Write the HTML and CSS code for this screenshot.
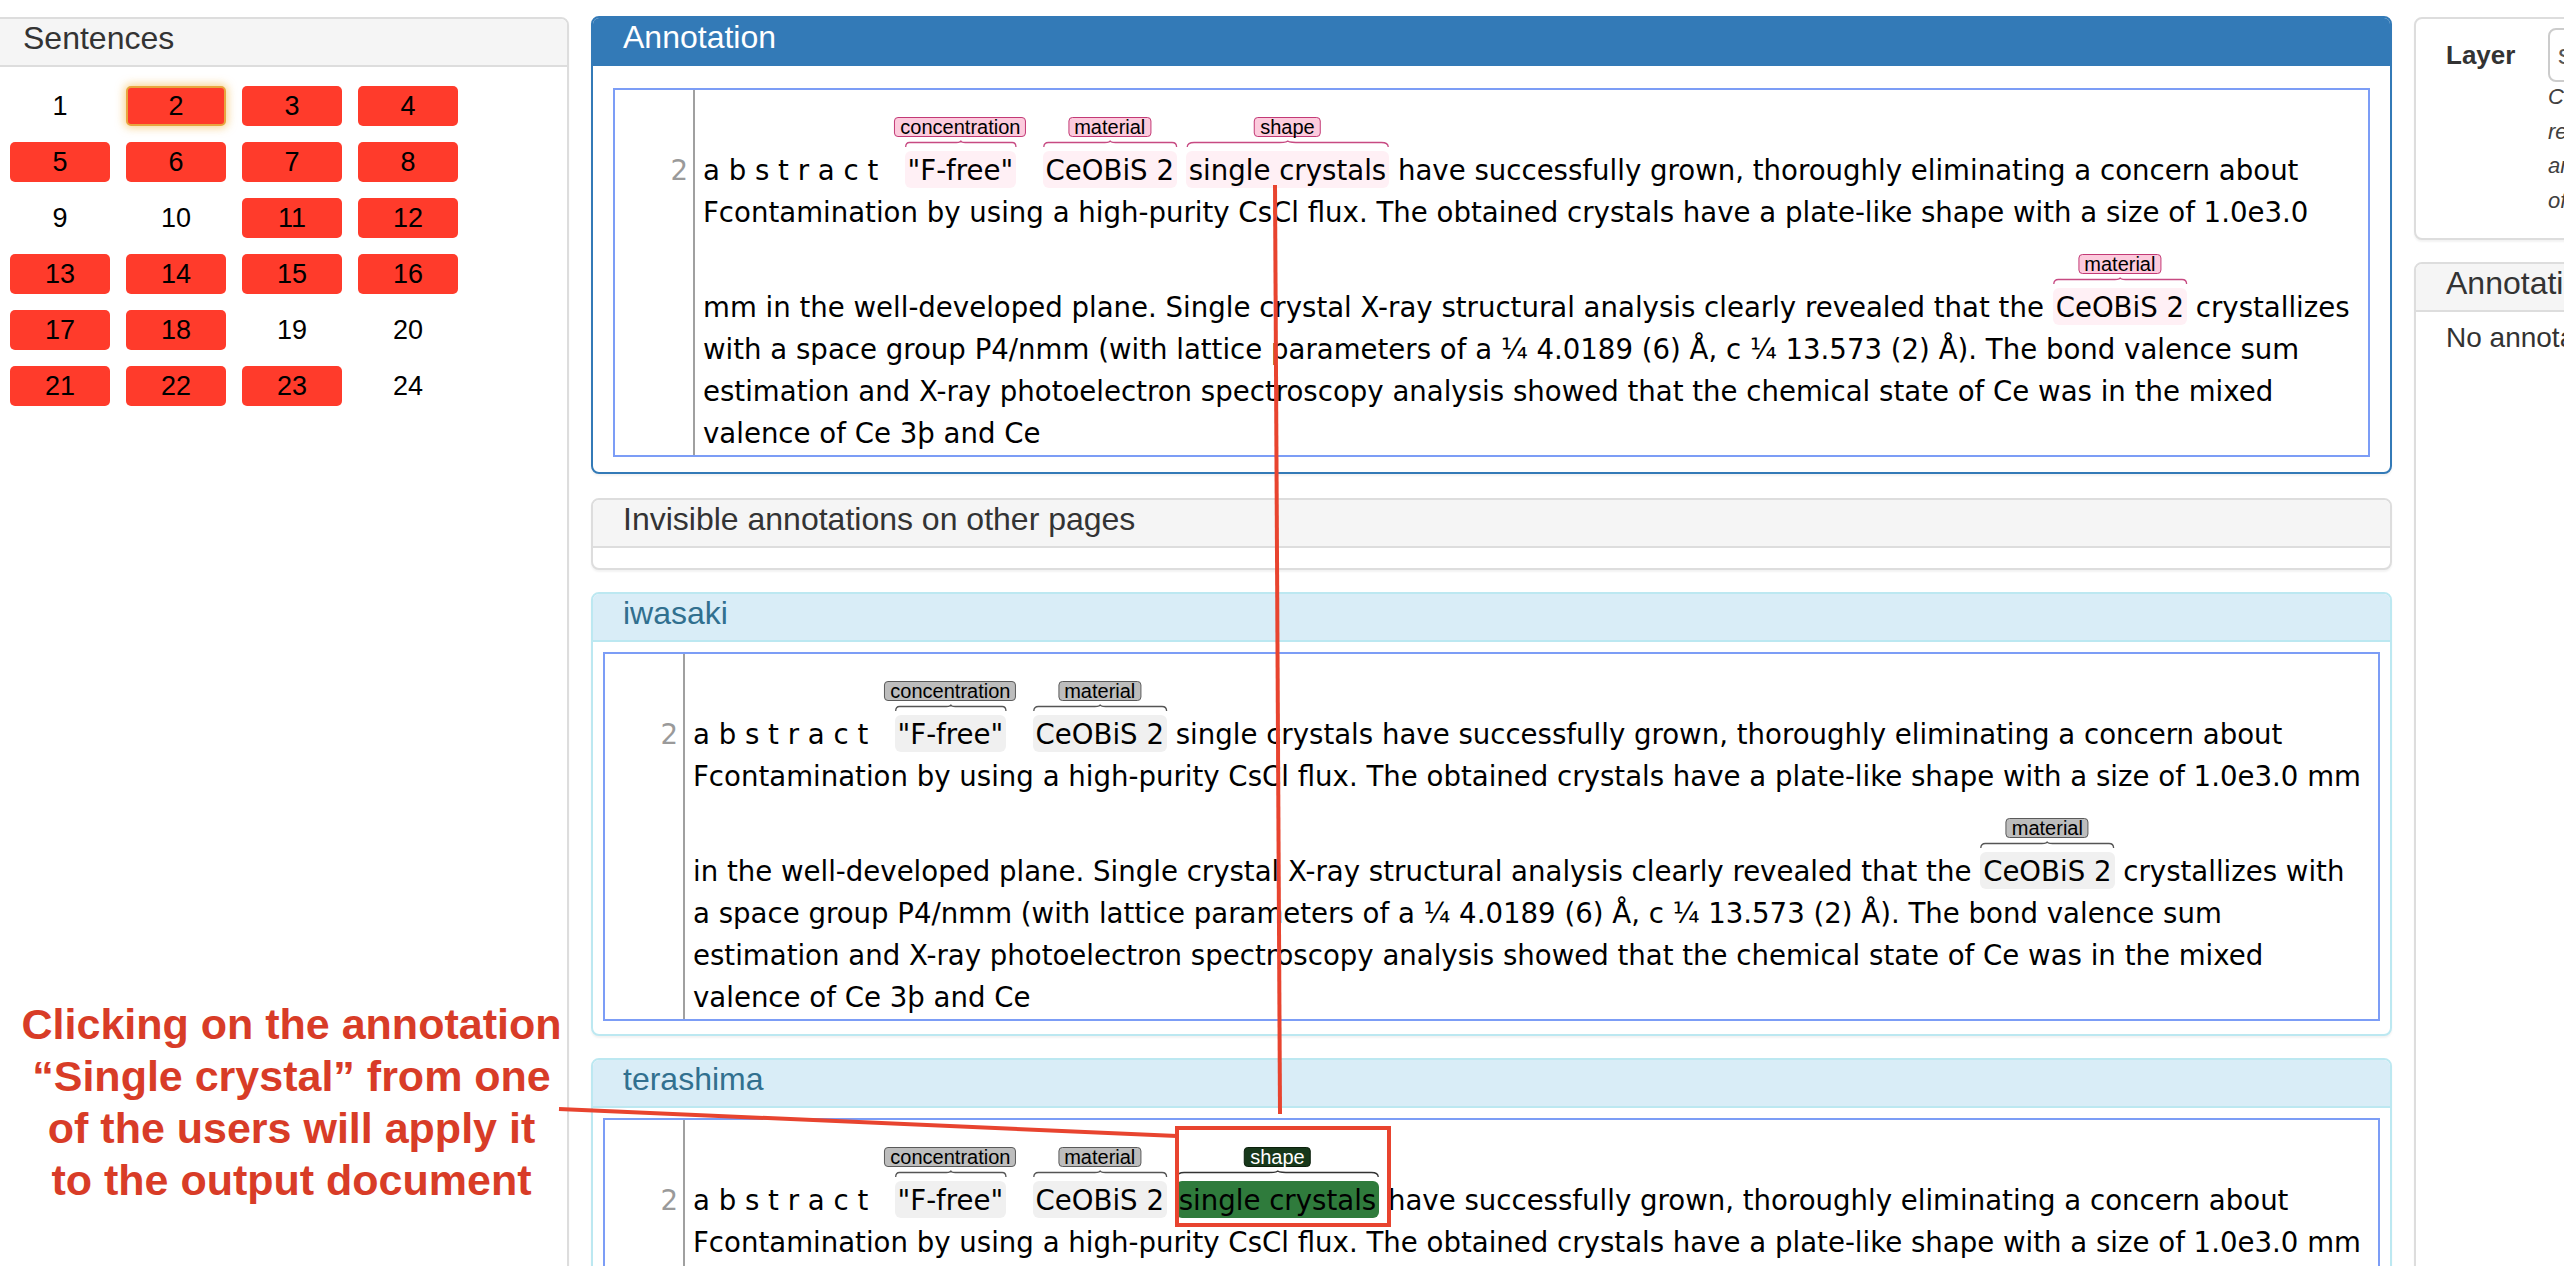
FILE: index.html
```html
<!DOCTYPE html>
<html>
<head>
<meta charset="utf-8">
<title>Curation</title>
<link rel="stylesheet" href="styles.css">
</head>
<body>
<div class="page">
  <div class="col-left">
    <div class="panel panel-tall">
      <div class="panel-heading ph-sent">Sentences</div>
      <div class="sent-grid">
        <div class="sent">1</div><div class="sent r sel">2</div><div class="sent r">3</div><div class="sent r">4</div>
        <div class="sent r">5</div><div class="sent r">6</div><div class="sent r">7</div><div class="sent r">8</div>
        <div class="sent">9</div><div class="sent">10</div><div class="sent r">11</div><div class="sent r">12</div>
        <div class="sent r">13</div><div class="sent r">14</div><div class="sent r">15</div><div class="sent r">16</div>
        <div class="sent r">17</div><div class="sent r">18</div><div class="sent">19</div><div class="sent">20</div>
        <div class="sent r">21</div><div class="sent r">22</div><div class="sent r">23</div><div class="sent">24</div>
      </div>
    </div>
  </div>

  <div class="col-main">
    <div class="panel primary">
      <div class="panel-heading">Annotation</div>
      <div class="panel-body body-ann">
        <div class="brat">
          <div class="num">2</div>
          <div class="lines">
<div class="row tall">a b s t r a c t   <span class="a pk">"F-free"<span class="lbl">concentration</span><svg class="brace" viewBox="0 0 100 7" preserveAspectRatio="none"><path d="M0.6,7 Q0.6,2.5 4,2.5 L46,2.5 Q50,2.5 50,0.5 Q50,2.5 54,2.5 L96,2.5 Q99.4,2.5 99.4,7"/></svg></span>   <span class="a pk">CeOBiS 2<span class="lbl">material</span><svg class="brace" viewBox="0 0 100 7" preserveAspectRatio="none"><path d="M0.6,7 Q0.6,2.5 4,2.5 L46,2.5 Q50,2.5 50,0.5 Q50,2.5 54,2.5 L96,2.5 Q99.4,2.5 99.4,7"/></svg></span> <span class="a pk">single crystals<span class="lbl">shape</span><svg class="brace" viewBox="0 0 100 7" preserveAspectRatio="none"><path d="M0.6,7 Q0.6,2.5 4,2.5 L46,2.5 Q50,2.5 50,0.5 Q50,2.5 54,2.5 L96,2.5 Q99.4,2.5 99.4,7"/></svg></span> have successfully grown, thoroughly eliminating a concern about</div>
<div class="row">Fcontamination by using a high-purity CsCl flux. The obtained crystals have a plate-like shape with a size of 1.0e3.0</div>
<div class="row tall">mm in the well-developed plane. Single crystal X-ray structural analysis clearly revealed that the <span class="a pk">CeOBiS 2<span class="lbl">material</span><svg class="brace" viewBox="0 0 100 7" preserveAspectRatio="none"><path d="M0.6,7 Q0.6,2.5 4,2.5 L46,2.5 Q50,2.5 50,0.5 Q50,2.5 54,2.5 L96,2.5 Q99.4,2.5 99.4,7"/></svg></span> crystallizes</div>
<div class="row">with a space group P4/nmm (with lattice parameters of a ¼ 4.0189 (6) Å, c ¼ 13.573 (2) Å). The bond valence sum</div>
<div class="row">estimation and X-ray photoelectron spectroscopy analysis showed that the chemical state of Ce was in the mixed</div>
<div class="row">valence of Ce 3þ and Ce</div>
          </div>
        </div>
      </div>
    </div>

    <div class="panel panel-inv">
      <div class="panel-heading">Invisible annotations on other pages</div>
      <div class="panel-body body-empty"></div>
    </div>

    <div class="panel info">
      <div class="panel-heading">iwasaki</div>
      <div class="panel-body body-user">
        <div class="brat">
          <div class="num">2</div>
          <div class="lines">
<div class="row tall">a b s t r a c t   <span class="a gy">"F-free"<span class="lbl">concentration</span><svg class="brace" viewBox="0 0 100 7" preserveAspectRatio="none"><path d="M0.6,7 Q0.6,2.5 4,2.5 L46,2.5 Q50,2.5 50,0.5 Q50,2.5 54,2.5 L96,2.5 Q99.4,2.5 99.4,7"/></svg></span>   <span class="a gy">CeOBiS 2<span class="lbl">material</span><svg class="brace" viewBox="0 0 100 7" preserveAspectRatio="none"><path d="M0.6,7 Q0.6,2.5 4,2.5 L46,2.5 Q50,2.5 50,0.5 Q50,2.5 54,2.5 L96,2.5 Q99.4,2.5 99.4,7"/></svg></span> single crystals have successfully grown, thoroughly eliminating a concern about</div>
<div class="row">Fcontamination by using a high-purity CsCl flux. The obtained crystals have a plate-like shape with a size of 1.0e3.0 mm</div>
<div class="row tall">in the well-developed plane. Single crystal X-ray structural analysis clearly revealed that the <span class="a gy">CeOBiS 2<span class="lbl">material</span><svg class="brace" viewBox="0 0 100 7" preserveAspectRatio="none"><path d="M0.6,7 Q0.6,2.5 4,2.5 L46,2.5 Q50,2.5 50,0.5 Q50,2.5 54,2.5 L96,2.5 Q99.4,2.5 99.4,7"/></svg></span> crystallizes with</div>
<div class="row">a space group P4/nmm (with lattice parameters of a ¼ 4.0189 (6) Å, c ¼ 13.573 (2) Å). The bond valence sum</div>
<div class="row">estimation and X-ray photoelectron spectroscopy analysis showed that the chemical state of Ce was in the mixed</div>
<div class="row">valence of Ce 3þ and Ce</div>
          </div>
        </div>
      </div>
    </div>

    <div class="panel info">
      <div class="panel-heading">terashima</div>
      <div class="panel-body body-user">
        <div class="brat">
          <div class="num">2</div>
          <div class="lines">
<div class="row tall">a b s t r a c t   <span class="a gy">"F-free"<span class="lbl">concentration</span><svg class="brace" viewBox="0 0 100 7" preserveAspectRatio="none"><path d="M0.6,7 Q0.6,2.5 4,2.5 L46,2.5 Q50,2.5 50,0.5 Q50,2.5 54,2.5 L96,2.5 Q99.4,2.5 99.4,7"/></svg></span>   <span class="a gy">CeOBiS 2<span class="lbl">material</span><svg class="brace" viewBox="0 0 100 7" preserveAspectRatio="none"><path d="M0.6,7 Q0.6,2.5 4,2.5 L46,2.5 Q50,2.5 50,0.5 Q50,2.5 54,2.5 L96,2.5 Q99.4,2.5 99.4,7"/></svg></span> <span class="a gr">single crystals<span class="lbl">shape</span><svg class="brace" viewBox="0 0 100 7" preserveAspectRatio="none"><path d="M0.6,7 Q0.6,2.5 4,2.5 L46,2.5 Q50,2.5 50,0.5 Q50,2.5 54,2.5 L96,2.5 Q99.4,2.5 99.4,7"/></svg></span> have successfully grown, thoroughly eliminating a concern about</div>
<div class="row">Fcontamination by using a high-purity CsCl flux. The obtained crystals have a plate-like shape with a size of 1.0e3.0 mm</div>
<div class="row">in the well-developed plane. Single crystal X-ray structural analysis clearly revealed that the CeOBiS 2 crystallizes with</div>
          </div>
        </div>
      </div>
    </div>
  </div>

  <div class="col-right">
    <div class="panel panel-layer">
      <div class="layer-body">
        <div class="layer-label">Layer</div>
        <div class="layer-ctrl">
          <div class="select">shape</div>
          <div class="help">Click on the text to<br>record a new annotation<br>and select a layer<br>of your choice</div>
        </div>
      </div>
    </div>
    <div class="panel panel-tall">
      <div class="panel-heading">Annotation</div>
      <div class="panel-body body-side">No annotation selected</div>
    </div>
  </div>
</div>

<div class="callout">Clicking on the annotation<br>“Single crystal” from one<br>of the users will apply it<br>to the output document</div>

<svg class="arrows" width="2564" height="1266" viewBox="0 0 2564 1266">
  <line x1="1275" y1="185" x2="1280" y2="1114"/>
  <line x1="559" y1="1109" x2="1177" y2="1136"/>
  <rect x="1177" y="1128" width="212" height="97"/>
</svg>
</body>
</html>
```

FILE: styles.css
```css
* { box-sizing: border-box; }
html, body { margin: 0; padding: 0; }
body {
  width: 2564px;
  height: 1266px;
  overflow: hidden;
  position: relative;
  background: #fff;
  font-family: "Liberation Sans", Arial, sans-serif;
  color: #333;
}

.page {
  display: flex;
  align-items: flex-start;
  padding-top: 16px;
}

.col-left { flex: none; width: 579px; margin-left: -10px; margin-top: 1px; }
.col-main { flex: none; width: 1801px; margin-left: 22px; }
.col-right { flex: none; width: 600px; margin-left: 22px; margin-top: 1px; }

/* panels */
.panel {
  border: 2px solid #ddd;
  border-radius: 8px;
  background: #fff;
  box-shadow: 0 2px 2px rgba(0, 0, 0, 0.05);
  margin-bottom: 22px;
}
.panel-heading {
  padding: 2px 30px 9px;
  background: #f5f5f5;
  border-bottom: 2px solid #ddd;
  border-radius: 6px 6px 0 0;
  font-size: 32px;
  line-height: 35px;
  color: #333;
  white-space: nowrap;
}
.panel-tall { min-height: 1400px; }
.ph-sent { padding-left: 31px; }

.primary { border-color: #337ab7; margin-bottom: 24px; }
.primary .panel-heading { background: #337ab7; border-bottom-color: #337ab7; color: #fff; }

.info { border-color: #bce8f1; }
.info .panel-heading { background: #d9edf7; border-bottom-color: #bce8f1; color: #31708f; }

.body-ann { padding: 22px 20px 15px; }
.body-empty { height: 20px; }
.body-user { padding: 10px 10px 13px; }
.body-side { padding: 6px 30px; font-size: 28px; line-height: 40px; color: #333; white-space: nowrap; }

/* sentence grid */
.sent-grid {
  display: grid;
  grid-template-columns: repeat(4, 100px);
  column-gap: 16px;
  row-gap: 16px;
  padding: 19px 18px;
}
.sent {
  height: 40px;
  line-height: 40px;
  text-align: center;
  font-size: 27px;
  color: #000;
  border-radius: 5px;
}
.sent.r { background: #ff3b2b; }
.sent.sel {
  border: 2px solid #e8a53e;
  line-height: 36px;
  box-shadow: 0 0 8px 2px rgba(240, 178, 62, 0.55);
}

/* brat-like text view */
.brat {
  display: flex;
  border: 2px solid #7c9df6;
  background: #fff;
}
.num {
  flex: none;
  width: 80px;
  padding: 60px 5px 0 0;
  border-right: 2px solid #a0a0a0;
  text-align: right;
  font-family: "DejaVu Sans", Verdana, sans-serif;
  font-size: 27.6px;
  line-height: 42px;
  color: #9a9a9a;
}
.lines {
  flex: 1;
  min-width: 0;
  padding: 7px 0 0 8px;
}
.row {
  height: 42px;
  line-height: 42px;
  white-space: pre;
  font-family: "DejaVu Sans", Verdana, sans-serif;
  font-size: 27.6px;
  color: #000;
}
.row.tall { height: 95px; padding-top: 53px; }

.a {
  position: relative;
  padding: 3px 3px 1px;
  border-radius: 6px;
}
.lbl {
  position: absolute;
  left: 50%;
  top: -34px;
  transform: translateX(-50%);
  height: 20px;
  padding: 0 5px;
  border: 1px solid;
  border-radius: 4px;
  font-family: "Liberation Sans", Arial, sans-serif;
  font-size: 20px;
  line-height: 18px;
  color: #000;
  white-space: nowrap;
}
.brace {
  position: absolute;
  left: 0;
  top: -11px;
  width: 100%;
  height: 7px;
  overflow: visible;
}
.brace path { fill: none; stroke-width: 1.3; vector-effect: non-scaling-stroke; }

.pk { background: #fff0f5; }
.pk .lbl { background: #fccbdd; border-color: #c33a76; }
.pk .brace path { stroke: #c74a82; }

.gy { background: #f0f0f0; }
.gy .lbl { background: #bdbdbd; border-color: #5a5a5a; }
.gy .brace path { stroke: #555; }

.gr { background: #2f7b3c; }
.gr .lbl { background: #17381a; border-color: #0b1f0c; color: #fff; }
.gr .brace path { stroke: #333; }

/* right column */
.panel-layer { height: 223px; }
.layer-body {
  display: flex;
  padding: 9px 30px 0 30px;
}
.layer-label {
  flex: none;
  width: 102px;
  font-weight: bold;
  font-size: 26px;
  line-height: 54px;
  color: #333;
}
.layer-ctrl { flex: none; width: 420px; }
.select {
  height: 54px;
  border: 2px solid #ccc;
  border-radius: 8px;
  padding-left: 8px;
  font-size: 28px;
  line-height: 50px;
  color: #555;
}
.help {
  margin-top: -2px;
  font-style: italic;
  font-size: 22px;
  line-height: 34.5px;
  color: #404040;
  white-space: nowrap;
}

/* callout overlay */
.callout {
  position: absolute;
  left: 0;
  top: 998px;
  width: 583px;
  text-align: center;
  font-weight: bold;
  font-size: 43px;
  line-height: 52px;
  color: #d83c27;
}
.arrows {
  position: absolute;
  left: 0;
  top: 0;
  pointer-events: none;
}
.arrows line, .arrows rect {
  fill: none;
  stroke: #e8442f;
  stroke-width: 4;
}
```
